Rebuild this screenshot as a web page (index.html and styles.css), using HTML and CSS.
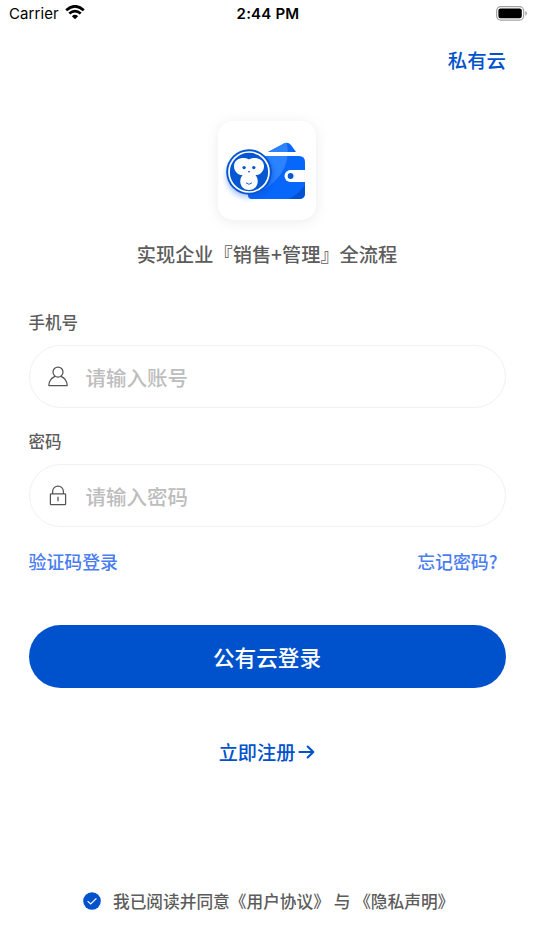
FILE: index.html
```html
<!DOCTYPE html>
<html lang="zh-CN">
<head>
<meta charset="utf-8">
<meta name="viewport" content="width=device-width">
<title>登录</title>
<link rel="stylesheet" href="styles.css">
</head>
<body>
<header class="status">
  <div class="carrier"><span>Carrier</span>
    <svg width="20" height="15" viewBox="0 0 20 15" fill="none" stroke="#000" stroke-width="2.7"><path d="M1.2 5.2Q10-2.6 18.8 5.2"/><path d="M4.3 8.5Q10 3.6 15.7 8.5"/><path d="M6.9 11.2Q10 8.4 13.1 11.2L10 14.3Z" fill="#000" stroke="none"/></svg>
  </div>
  <div class="time">2:44 PM</div>
  <svg class="battery" width="31" height="15" viewBox="0 0 31 15"><rect x=".65" y=".65" width="27" height="13.4" rx="4" fill="none" stroke="#a3a3a3" stroke-width="1.2"/><rect x="2.4" y="2.4" width="23.4" height="9.9" rx="2.2"/><path d="M29.3 5Q31 5.7 31 7.3T29.3 9.7Z" fill="#a3a3a3"/></svg>
</header>
<nav class="top"><a class="private">私有云</a></nav>
<main>
  <div class="logo">
    <svg width="98" height="98" viewBox="0 0 98 98">
      <defs>
        <clipPath id="purse"><path d="M50 31L66 22.4Q70 20.6 73 24L78 31ZM34 35H81Q87 35 87 41V72Q87 78 81 78H34Q30 78 30 74V35Z"/></clipPath>
        <filter id="soft" x="-30%" y="-30%" width="160%" height="160%"><feGaussianBlur stdDeviation="2.6"/></filter>
      </defs>
      <g clip-path="url(#purse)">
        <path fill="#0867fb" d="M20 15H90V82H20Z"/>
        <path fill="#2c83ff" d="M30 15H67Q76 42 56 61Q45 72 30 70Z"/>
        <path fill="#0052d0" d="M90 59Q82 73 69 79H90Z"/>
        <circle cx="32" cy="54" r="23" fill="#004bd0" opacity=".5" filter="url(#soft)"/>
      </g>
      <circle cx="30" cy="55" r="22" fill="#236dea" opacity=".35" filter="url(#soft)"/>
      <path fill="#fff" d="M87 49H72.5A5.9 5.9 0 0 0 72.5 61H87Z"/><circle cx="72.6" cy="55" r="2.9" fill="#0757db"/>
      <circle cx="31" cy="51" r="22.8" fill="#0756d2"/>
      <circle cx="31" cy="51" r="20" fill="#0756d2" stroke="#fff" stroke-width="1.7"/>
      <path fill="#fff" d="M31 38.4C27 35.5 16 36.5 16 45.2C16 50.5 20 54.1 24.5 54C22.5 56.5 22.2 59 22.3 61C22.6 65.8 26.2 69 31 69S39.4 65.8 39.7 61C39.8 59 39.5 56.5 37.5 54C42 54.1 46 50.5 46 45.2C46 36.5 35 35.5 31 38.4Z"/>
      <g fill="#0756d2"><circle cx="26.1" cy="46.6" r="1.7"/><circle cx="35.8" cy="46.6" r="1.7"/><ellipse cx="31" cy="50.8" rx="1" ry=".7"/></g>
      <path d="M28 61.8Q31 64.8 34 61.8" fill="none" stroke="#0756d2" stroke-width=".9"/>
    </svg>
  </div>
  <h1>实现企业『销售+管理』全流程</h1>
  <form>
    <label for="phone">手机号</label>
    <div class="field">
      <svg width="20" height="21" viewBox="0 0 20 21" fill="none" stroke="#555" stroke-width="1.25"><circle cx="10" cy="6.1" r="5"/><path d="M7 10.4C3.2 12 1 15.4 .8 19.5H19.2C19 15.4 16.8 12 13 10.4" stroke-linejoin="round"/></svg>
      <input id="phone" type="text" placeholder="请输入账号">
    </div>
    <label for="password">密码</label>
    <div class="field">
      <svg width="20" height="21" viewBox="0 0 20 21" fill="none" stroke="#555" stroke-width="1.25"><rect x="2.4" y="8.9" width="15.2" height="10.7" rx=".7"/><path d="M4.6 8.9V6.5A5.4 5.4 0 0 1 15.4 6.5V8.9M10 11.8V16.2"/></svg>
      <input id="password" type="password" placeholder="请输入密码">
    </div>
    <div class="links"><a>验证码登录</a><a class="forgot">忘记密码?</a></div>
    <button type="button">公有云登录</button>
  </form>
  <a class="register">立即注册<svg width="17" height="14" viewBox="0 0 17 14" fill="none" stroke="#0052cc" stroke-width="2.1" stroke-linecap="round" stroke-linejoin="round"><path d="M1.5 7H15M9.7 1.5L15.3 7L9.7 12.5"/></svg></a>
</main>
<footer>
  <svg width="18" height="18" viewBox="0 0 18 18"><circle cx="9" cy="9" r="8.8" fill="#0052cc"/><path d="M4.6 9.1L7.7 12L13.4 6.4" fill="none" stroke="#fff" stroke-width="1.2"/></svg>
  <span>我已阅读并同意《用户协议》 与 《隐私声明》</span>
</footer>
</body>
</html>
```
FILE: styles.css
```css
* { box-sizing: border-box; }
body {
  margin: 0;
  height: 950px;
  display: flex;
  flex-direction: column;
  background: #fff;
  color: #5c5c5c;
  font-family: "Noto Sans CJK SC", sans-serif;
  font-weight: 500;
  overflow: hidden;
}
svg { display: block; flex: none; }
.status {
  height: 27px;
  padding: 0 7px 0 9px;
  display: grid;
  grid-template-columns: 1fr auto 1fr;
  align-items: center;
  color: #000;
  font: 400 15px/27px Inter, sans-serif;
}
.carrier { display: flex; align-items: center; gap: 6px; letter-spacing: .1px; }
.carrier svg { margin-top: -2px; }
.time { font-weight: 600; letter-spacing: .2px; }
.battery { justify-self: end; }
.top { height: 94px; padding: 19px 28px 0; text-align: right; }
.private { color: #0052cc; font-size: 19.4px; line-height: 28px; display: block; }
main { padding: 0 28.5px; display: flex; flex-direction: column; align-items: center; }
.logo { width: 98px; height: 99px; border-radius: 15px; background: #fff; box-shadow: 0 2px 14px rgba(0, 0, 0, .08); }
h1 { margin: 20px 0 0; font-size: 19.2px; line-height: 28px; font-weight: 500; white-space: nowrap; }
form { width: 100%; margin-top: 41px; }
label { display: block; height: 36px; font-size: 16.5px; line-height: 26px; }
.field {
  height: 63px;
  margin-bottom: 20px;
  padding: 0 18px;
  display: flex;
  align-items: center;
  gap: 18px;
  border: 1px solid #f1f1f1;
  border-radius: 32px;
}
input {
  flex: 1;
  min-width: 0;
  padding: 0;
  border: 0;
  outline: 0;
  background: none;
  font: 500 20.5px/30px "Noto Sans CJK SC", sans-serif;
}
input::placeholder { color: #bdbdbd; }
.links { display: flex; justify-content: space-between; padding-right: 8px; color: #4a7df0; font-size: 17.9px; line-height: 28px; }
button {
  display: block;
  width: 100%;
  height: 63px;
  margin-top: 50px;
  padding: 0;
  border: 0;
  border-radius: 32px;
  background: #0052cc;
  color: #fff;
  font: 500 21.6px/63px "Noto Sans CJK SC", sans-serif;
}
.register { display: flex; align-items: center; gap: 3px; margin-top: 50px; color: #0052cc; font-size: 19.2px; line-height: 28px; }
footer { margin-top: auto; padding: 0 0 36px 83px; display: flex; align-items: center; gap: 12px; font-size: 16.7px; line-height: 26px; white-space: nowrap; }
```
